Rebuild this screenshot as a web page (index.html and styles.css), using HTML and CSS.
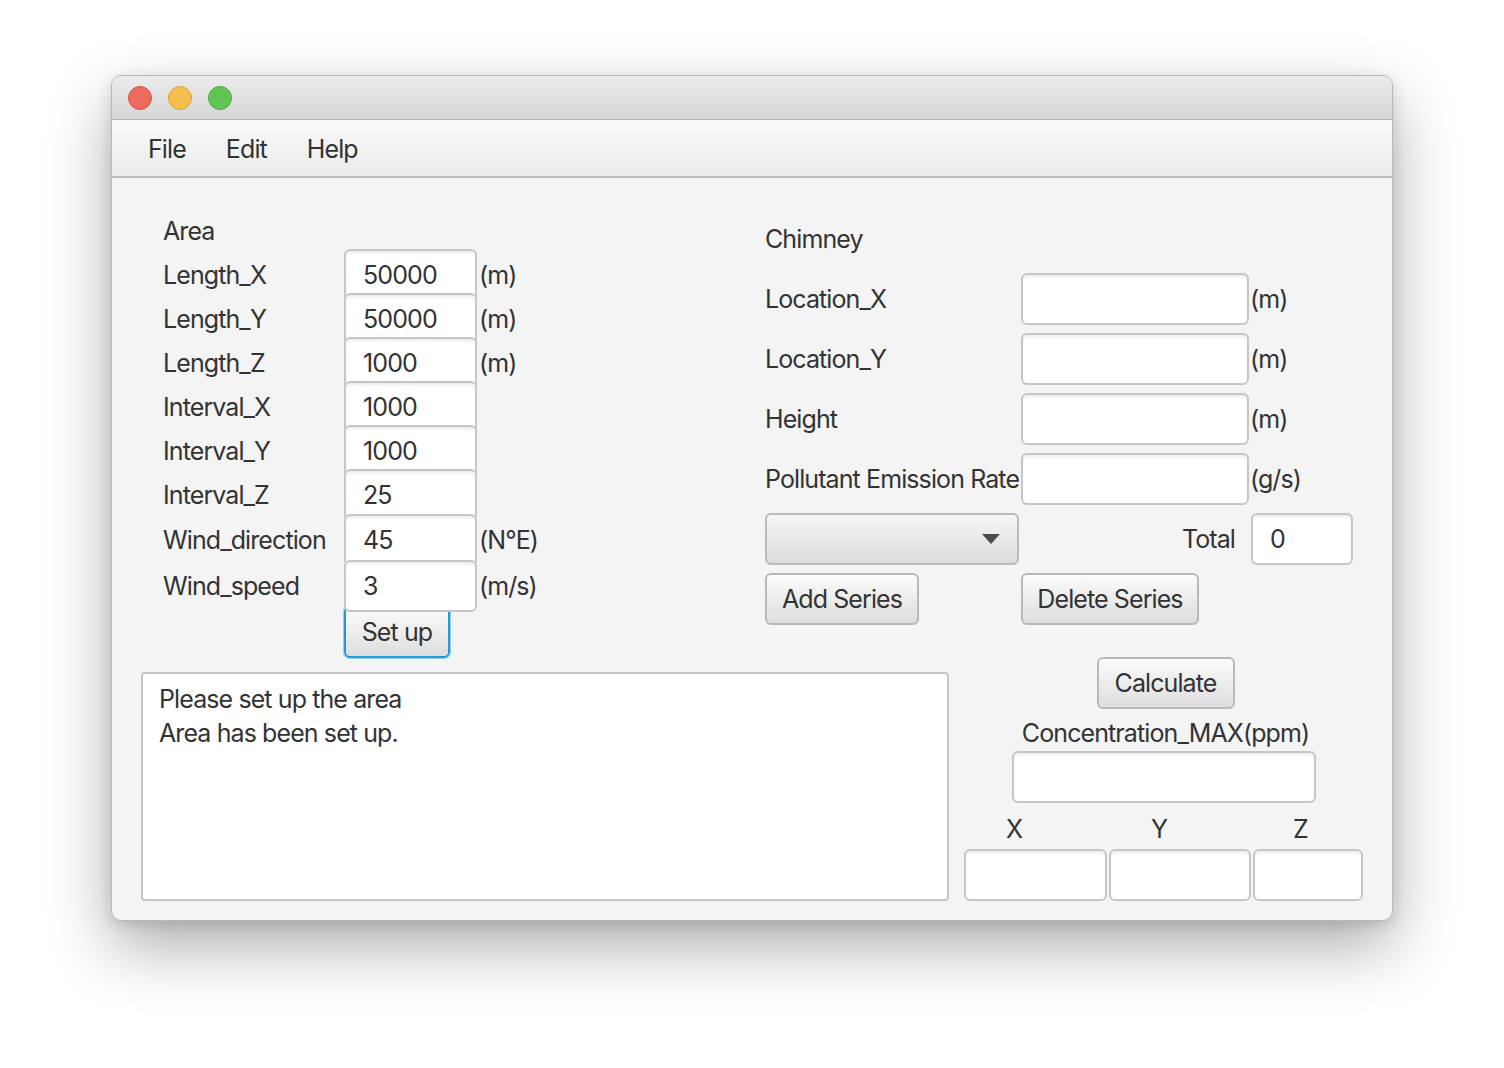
FILE: index.html
```html
<!DOCTYPE html>
<html>
<head>
<meta charset="utf-8">
<title>Dispersion</title>
<link rel="stylesheet" href="styles.css">
</head>
<body>
<div class="window">
  <div class="titlebar">
    <span class="light red"></span>
    <span class="light yellow"></span>
    <span class="light green"></span>
  </div>
  <div class="menubar">
    <span class="menu-item">File</span>
    <span class="menu-item">Edit</span>
    <span class="menu-item">Help</span>
  </div>
  <div class="content">
    <div class="top">
      <div class="area-form">
        <div class="lbl">Area</div><div></div><div></div>
        <div class="lbl">Length_X</div><div class="field">50000</div><div class="unit">(m)</div>
        <div class="lbl">Length_Y</div><div class="field">50000</div><div class="unit">(m)</div>
        <div class="lbl">Length_Z</div><div class="field">1000</div><div class="unit">(m)</div>
        <div class="lbl">Interval_X</div><div class="field">1000</div><div></div>
        <div class="lbl">Interval_Y</div><div class="field">1000</div><div></div>
        <div class="lbl">Interval_Z</div><div class="field">25</div><div></div>
        <div class="lbl">Wind_direction</div><div class="field">45</div><div class="unit">(N°E)</div>
        <div class="lbl">Wind_speed</div><div class="field">3</div><div class="unit">(m/s)</div>
        <div></div><div class="btn setup">Set up</div><div></div>
      </div>
      <div class="chimney-form">
        <div class="lbl">Chimney</div><div></div><div></div>
        <div class="lbl">Location_X</div><div class="field wide"></div><div class="unit">(m)</div>
        <div class="lbl">Location_Y</div><div class="field wide"></div><div class="unit">(m)</div>
        <div class="lbl">Height</div><div class="field wide"></div><div class="unit">(m)</div>
        <div class="lbl">Pollutant Emission Rate</div><div class="field wide"></div><div class="unit">(g/s)</div>
        <div class="combo"><span class="arrow"></span></div><div class="lbl total-lbl">Total</div><div class="field total">0</div>
        <div class="btn add">Add Series</div><div class="btn del">Delete Series</div><div></div>
      </div>
    </div>
    <div class="bottom">
      <div class="log">Please set up the area<br>Area has been set up.</div>
      <div class="results">
        <div class="btn calc">Calculate</div>
        <div class="lbl conc">Concentration_MAX(ppm)</div>
        <div class="field conc-field"></div>
        <div class="xyz">
          <div class="lbl axis">X</div><div class="lbl axis">Y</div><div class="lbl axis">Z</div>
          <div class="field xf"></div><div class="field xf"></div><div class="field xf"></div>
        </div>
      </div>
    </div>
  </div>
</div>
</body>
</html>
```

FILE: styles.css
```css
* { box-sizing: border-box; }
html, body { margin: 0; padding: 0; background: #ffffff; }
body {
  font-family: "Inter", "Open Sans", sans-serif;
  font-size: 25px;
  letter-spacing: -0.9px;
  color: #333333;
  height: 1068px;
  overflow: hidden;
}
.window {
  margin: 75px 0 0 111px;
  width: 1282px;
  height: 846px;
  border: 1px solid #b8b8b8;
  border-radius: 10px;
  background: #f4f4f4;
  box-shadow: 0 26px 64px rgba(0,0,0,0.32), 0 4px 14px rgba(0,0,0,0.12);
  display: flex;
  flex-direction: column;
  overflow: hidden;
}
.titlebar {
  height: 44px;
  flex: none;
  background: linear-gradient(#ececec, #d6d6d6);
  border-bottom: 1px solid #b2b2b2;
  display: flex;
  align-items: center;
  gap: 16px;
  padding-left: 16px;
}
.light {
  width: 24px;
  height: 24px;
  border-radius: 50%;
  display: block;
}
.red { background: #ed6a5e; border: 1px solid #d9534a; }
.yellow { background: #f5be4f; border: 1px solid #dca33a; }
.green { background: #61c454; border: 1px solid #4cab3f; }
.menubar {
  height: 58px;
  flex: none;
  background: linear-gradient(#fafafa, #ebebeb);
  border-bottom: 2px solid #bdbdbd;
  display: flex;
  align-items: center;
  padding-left: 16px;
  padding-top: 2px;
}
.menu-item { padding: 0 20px; }
.content { flex: 1; display: flex; flex-direction: column; }
.top { display: flex; padding-top: 31px; height: 479px; }
.area-form {
  margin-left: 51px;
  width: 602px;
  display: grid;
  grid-template-columns: 181px 133px auto;
  grid-template-rows: repeat(7, 44px) 46px 46px 46px;
  align-items: center;
  align-content: start;
}
.lbl { white-space: nowrap; }
.unit { padding-left: 2px; white-space: nowrap; }
.field {
  position: relative;
  z-index: 1;
  height: 52px;
  background: #ffffff;
  border: 2px solid #c6c6c6;
  border-radius: 6px;
  box-shadow: inset 0 4px 4px -3px rgba(0,0,0,0.12);
  padding-left: 17px;
  display: flex;
  align-items: center;
}
.btn {
  height: 52px;
  background: linear-gradient(#fbfbfb, #dedede);
  border: 2px solid #b9b9b9;
  border-radius: 6px;
  display: flex;
  align-items: center;
  justify-content: center;
  white-space: nowrap;
}
.setup {
  width: 106px;
  border-color: #2499d8;
  box-shadow: 0 0 0 1px #94d0f0;
}
.chimney-form {
  display: grid;
  grid-template-columns: 256px 231px 102px;
  grid-template-rows: repeat(7, 60px);
  align-items: center;
  align-content: start;
}
.chimney-form .unit { padding-left: 0; margin-left: -2px; }
.field.wide { width: 228px; }
.total-lbl { justify-self: end; padding-right: 17px; }
.field.total { width: 102px; margin-left: -1px; }
.combo {
  width: 254px;
  height: 52px;
  background: linear-gradient(#f6f6f6, #dcdcdc);
  border: 2px solid #bababa;
  border-radius: 6px;
  display: flex;
  align-items: center;
  justify-content: flex-end;
  padding-right: 17px;
}
.arrow {
  width: 0;
  height: 0;
  border-left: 9px solid transparent;
  border-right: 9px solid transparent;
  border-top: 10px solid #4d4d4d;
}
.add { width: 154px; }
.del { width: 178px; }
.bottom { display: flex; padding-left: 29px; gap: 15px; }
.log {
  margin-top: 15px;
  width: 808px;
  height: 229px;
  background: #ffffff;
  border: 2px solid #c6c6c6;
  border-radius: 4px;
  padding: 8px 0 0 16px;
  line-height: 34px;
}
.results {
  width: 403px;
  display: flex;
  flex-direction: column;
  align-items: center;
}
.calc { width: 138px; }
.conc { height: 42px; display: flex; align-items: center; padding-top: 5px; }
.conc-field { width: 304px; margin-left: -3px; }
.xyz {
  align-self: stretch;
  display: grid;
  grid-template-columns: 143px 142px 110px;
  grid-template-rows: 46px 52px;
  column-gap: 2px;
  align-items: center;
}
.axis { padding-left: 42px; padding-top: 5px; }
.axis:nth-child(3) { padding-left: 40px; }
.xf { height: 52px; padding: 0; }
```
